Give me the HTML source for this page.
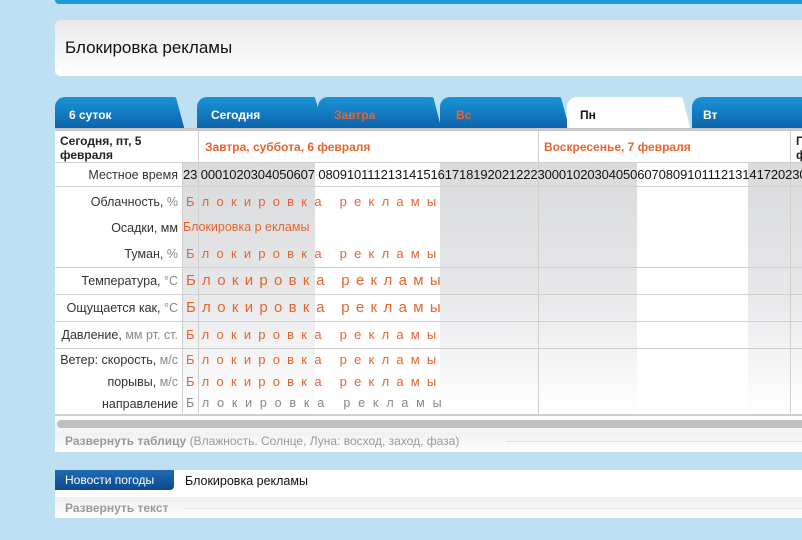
<!DOCTYPE html>
<html><head><meta charset="utf-8"><style>
*{margin:0;padding:0;box-sizing:border-box}
body{width:802px;height:540px;overflow:hidden;background:#bfdff2;font-family:"Liberation Sans",sans-serif;position:relative}
.a{position:absolute}
.g{background:linear-gradient(#d9dadc,#e6e7e9 50%,#fff)}
.tab{position:absolute;top:97px;height:34px;background:linear-gradient(#1a94d6,#0b5fa8);border-radius:10px 12px 0 0;clip-path:polygon(0 0,93% 0,100% 100%,0 100%);color:#fff;font-weight:bold;font-size:12px;padding:11px 0 0 14px}
.lbl{position:absolute;left:55px;width:123px;text-align:right;font-size:12.5px;color:#333;white-space:nowrap}
.lbl span{color:#888}
.ad{position:absolute;left:186px;color:#e8642d;font-size:13px;letter-spacing:7.2px;white-space:nowrap}
.hl{position:absolute;left:55px;width:747px;height:1px;background:#cfcfcf}
.vl{position:absolute;width:1px;background:#cfcfcf}
</style></head><body>
<div class="a" style="left:55px;top:0;width:747px;height:4px;background:#1a9ad8;border-radius:0 0 0 5px"></div>
<div class="a" style="left:55px;top:20px;width:747px;height:56px;background:linear-gradient(#e9e9e9,#fff);border-radius:5px 0 0 5px;font-size:17px;padding:18px 0 0 10px;color:#111">Блокировка рекламы</div>

<div class="tab" style="left:55px;width:130px">6 суток</div>
<div class="tab" style="left:197px;width:128px;clip-path:polygon(0 0,92% 0,100% 100%,0 100%)">Сегодня</div>
<div class="tab" style="left:318px;width:124px;color:#e8642d;padding-left:16px">Завтра</div>
<div class="tab" style="left:440px;width:130px;color:#e8642d;padding-left:16px">Вс</div>
<div class="tab" style="left:567px;width:124px;background:#fff;color:#111;padding-left:13px">Пн</div>
<div class="tab" style="left:692px;width:110px;clip-path:none;border-radius:10px 0 0 0;padding-left:11px">Вт</div>
<div class="a" style="left:55px;top:128px;width:747px;height:3px;background:#c8c8c8"></div>

<div class="a" style="left:55px;top:131px;width:747px;height:284px;background:#fff"></div>
<div class="a g" style="left:182px;top:162px;width:133px;height:253px"></div>
<div class="a g" style="left:440px;top:162px;width:197px;height:253px"></div>
<div class="a g" style="left:748px;top:162px;width:54px;height:253px"></div>

<div class="hl" style="top:162px"></div>
<div class="hl" style="top:186px"></div>
<div class="hl" style="top:267px"></div>
<div class="hl" style="top:294px"></div>
<div class="hl" style="top:321px"></div>
<div class="hl" style="top:348px"></div>
<div class="hl" style="top:414px;height:2px"></div>
<div class="vl" style="left:182px;top:162px;height:253px"></div>
<div class="vl" style="left:198px;top:131px;height:284px"></div>
<div class="vl" style="left:538px;top:131px;height:284px"></div>
<div class="vl" style="left:790px;top:131px;height:284px"></div>

<div class="a" style="left:60px;top:134px;font-size:12px;font-weight:bold;color:#222;line-height:14px;width:120px">Сегодня, пт, 5 февраля</div>
<div class="a" style="left:205px;top:140px;font-size:12px;font-weight:bold;color:#e8642d">Завтра, суббота, 6 февраля</div>
<div class="a" style="left:544px;top:140px;font-size:12px;font-weight:bold;color:#e8642d">Воскресенье, 7 февраля</div>
<div class="a" style="left:796px;top:134px;font-size:12px;font-weight:bold;color:#222;line-height:14px">П<br>ф</div>

<div class="lbl" style="top:168px">Местное время</div>
<div class="a" style="left:183px;top:167px;font-size:13px;color:#111;white-space:nowrap;letter-spacing:-0.1px">23 0001020304050607 0809101112131415161718192021222300010203040506070809101112131417202302</div>

<div class="lbl" style="top:195px">Облачность, <span>%</span></div>
<div class="ad" style="top:194px">Блокировка реклaмы</div>
<div class="lbl" style="top:221px">Осадки, мм</div>
<div class="a" style="left:183px;top:220px;font-size:12.5px;color:#e8642d">Блокировка р екламы</div>
<div class="lbl" style="top:247px">Туман, <span>%</span></div>
<div class="ad" style="top:246px">Блокировка реклaмы</div>
<div class="lbl" style="top:274px">Температура, <span>°C</span></div>
<div class="ad" style="top:272px;font-size:15px;letter-spacing:6.3px">Блокировка реклaмы</div>
<div class="lbl" style="top:301px">Ощущается как, <span>°C</span></div>
<div class="ad" style="top:299px;font-size:15px;letter-spacing:6.3px">Блокировка реклaмы</div>
<div class="lbl" style="top:328px">Давление, <span>мм рт. ст.</span></div>
<div class="ad" style="top:327px">Блокировка реклaмы</div>
<div class="lbl" style="top:353px">Ветер: скорость, <span>м/с</span></div>
<div class="ad" style="top:352px">Блокировка реклaмы</div>
<div class="lbl" style="top:375px">порывы, <span>м/с</span></div>
<div class="ad" style="top:374px">Блокировка реклaмы</div>
<div class="lbl" style="top:397px">направление</div>
<div class="ad" style="top:396px;color:#888;font-size:12.5px;letter-spacing:7.8px">Блокировка реклaмы</div>

<div class="a" style="left:55px;top:416px;width:747px;height:36px;background:linear-gradient(#fff,#f1f1f1 50%,#fff)"></div>
<div class="a" style="left:57px;top:420px;width:745px;height:8px;background:#c0c0c0;border-radius:4px 0 0 4px"></div>
<div class="a" style="left:65px;top:434px;font-size:12px;color:#999;white-space:nowrap"><b>Развернуть таблицу</b> (Влажность. Солнце, Луна: восход, заход, фаза)</div>
<div class="a" style="left:506px;top:441px;width:296px;height:1px;background:#e0e0e0"></div>

<div class="a" style="left:55px;top:470px;width:747px;height:27px;background:#fff"></div>
<div class="a" style="left:55px;top:470px;width:119px;height:20px;background:linear-gradient(#1f6bb3,#0d4a8e);border-radius:0 0 4px 0;color:#fff;font-size:12px;padding:3px 0 0 10px">Новости погоды</div>
<div class="a" style="left:185px;top:474px;font-size:12.5px;color:#111">Блокировка рекламы</div>
<div class="a" style="left:55px;top:497px;width:747px;height:21px;background:linear-gradient(#efefef,#fff)"></div>
<div class="a" style="left:65px;top:501px;font-size:12px;color:#999;font-weight:bold">Развернуть текст</div>
<div class="a" style="left:184px;top:508px;width:618px;height:1px;background:#e3e3e3"></div>
</body></html>
